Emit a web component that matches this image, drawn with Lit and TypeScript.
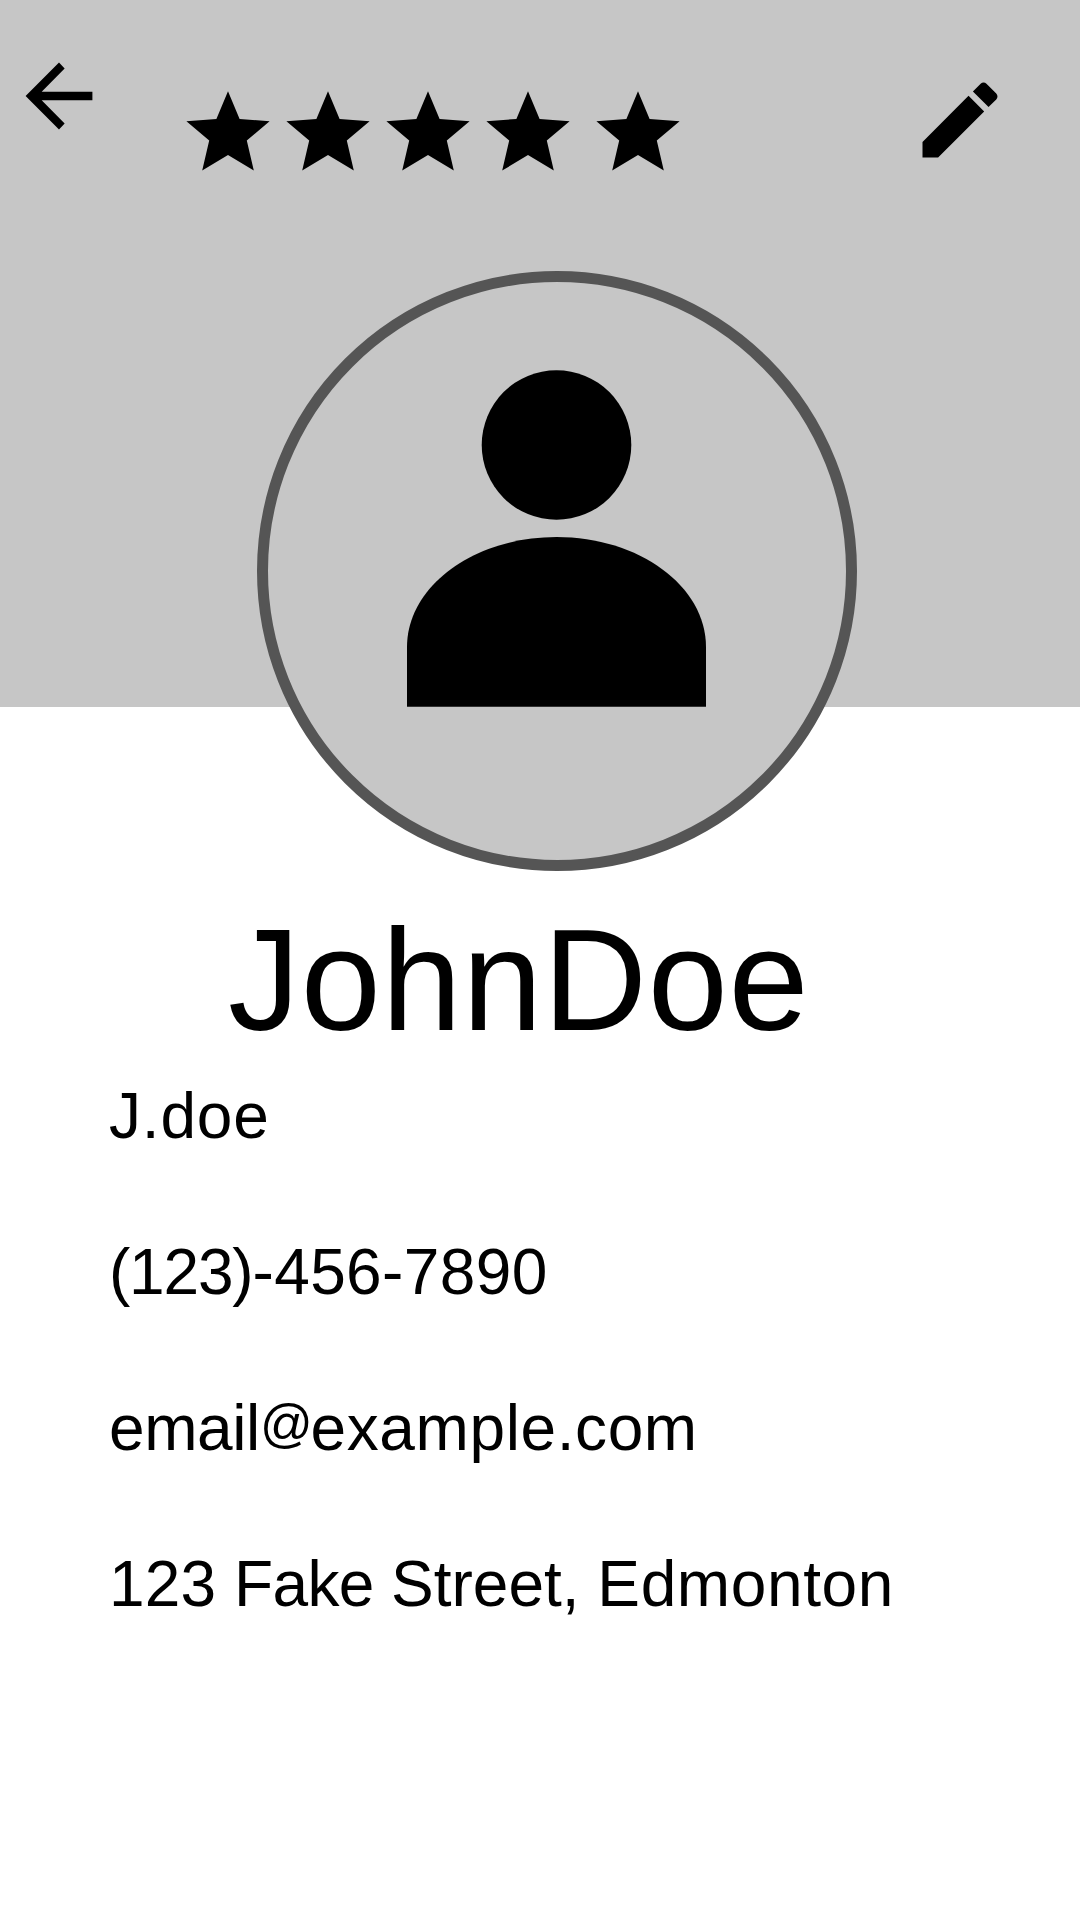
import { LitElement, html, css } from "lit";
import { customElement } from "lit/decorators.js";
import { classMap } from "lit/directives/class-map.js";
import { styleMap } from "lit/directives/style-map.js";

/** A run of text with its tracking in pixels. */
type Run = [text: string, tracking: number];

const DETAILS: Run[][] = [
  [["J.doe", 0.8]],
  [["(123)", -1.2], ["-456-7890", 0.4]],
  [["email", -0.4], ["@", -2.2], ["example.com", 0.6]],
  [["123 ", 0.1], ["Fake ", -0.6], ["Street, ", 0], ["Edmonton", 0.6]],
];
const STARS = [1, 2, 3, 4, 5];

@customElement("app-root")
export class AppRoot extends LitElement {
  static styles = css`
    :host {
      display: block;
      width: 1080px;
      height: 1920px;
      overflow: hidden;
      background: #fff;
      color: #000;
      font-family: "Liberation Sans", Arial, sans-serif;
    }
    svg {
      display: block;
    }
    .hero {
      box-sizing: border-box;
      height: 707px;
      background: #c6c6c6;
    }
    .bar {
      display: flex;
      align-items: flex-start;
      height: 271px;
      box-sizing: border-box;
      padding: 46px 70px 0 9px;
    }
    .icon {
      flex: none;
      width: 100px;
      height: 100px;
    }
    .edit {
      margin: 24px 0 0 auto;
    }
    .rating {
      display: flex;
      gap: 16px;
      margin: 45px 0 0 77px;
    }
    .star {
      width: 84px;
      height: 80px;
    }
    .star:last-child {
      margin-left: 10px;
    }
    .avatar {
      box-sizing: border-box;
      width: 600px;
      height: 600px;
      margin-left: 257px;
      border: 11px solid #555;
      border-radius: 50%;
      background: #c6c6c6;
      display: flex;
      justify-content: center;
      padding-top: 88px;
    }
    .person {
      width: 300px;
      height: 337px;
    }
    .profile {
      padding-top: 194px;
    }
    .name {
      margin: 0 0 16px 228px;
      font-size: 144px;
      line-height: 160px;
      font-weight: 400;
      letter-spacing: 0.7px;
      white-space: nowrap;
    }
    .details {
      display: flex;
      flex-direction: column;
      gap: 78px;
      margin: 0;
      padding: 0 0 0 109px;
      list-style: none;
      font-size: 64px;
      line-height: 78px;
      white-space: pre;
    }
    .at {
      font-size: 52px;
      line-height: 0;
      vertical-align: 9px;
    }
  `;

  render() {
    return html`
      <header class="hero">
        <div class="bar">
          <svg class="icon" viewBox="0 0 512 512" aria-hidden="true">
            <path d="M427 234.6H167.3l117.6-119.7L256 85 85 256l171 171 28.9-29.9-117.6-119.7H427z" />
          </svg>
          <div class="rating">
            ${STARS.map(
              () => html`<svg class="star" viewBox="0 0 84 80" aria-hidden="true">
                <path d="M42 .3 53.6 28 83.6 30.2 60.8 49.5 67.8 79.6 42 64 16.2 79.6 23.2 49.5 .4 30.2 30.4 28z" />
              </svg>`
            )}
          </div>
          <svg class="icon edit" viewBox="0 0 512 512" aria-hidden="true">
            <path
              d="M64 368v80h80l235.7-235.7-80-80L64 368zm377.6-217.6c8.5-8.5 8.5-21.3 0-29.9l-50.1-50.1c-8.5-8.5-21.3-8.5-29.9 0l-39.5 39.5 80 80 39.5-39.5z"
            />
          </svg>
        </div>
        <div class="avatar">
          <svg class="person" viewBox="0 0 300 337" aria-hidden="true">
            <circle cx="149.5" cy="75" r="74.8" />
            <path d="M0 336.7V277C0 216 67 167 149.5 167s149.5 49 149.5 110v59.7z" />
          </svg>
        </div>
      </header>
      <main class="profile">
        <h1 class="name">JohnDoe</h1>
        <ul class="details">
          ${DETAILS.map(
            (runs) =>
              html`<li>${runs.map(
                ([text, tracking]) =>
                  html`<span
                    class=${classMap({ at: text === "@" })}
                    style=${styleMap({ letterSpacing: `${tracking}px` })}
                    >${text}</span
                  >`
              )}</li>`
          )}
        </ul>
      </main>
    `;
  }
}
